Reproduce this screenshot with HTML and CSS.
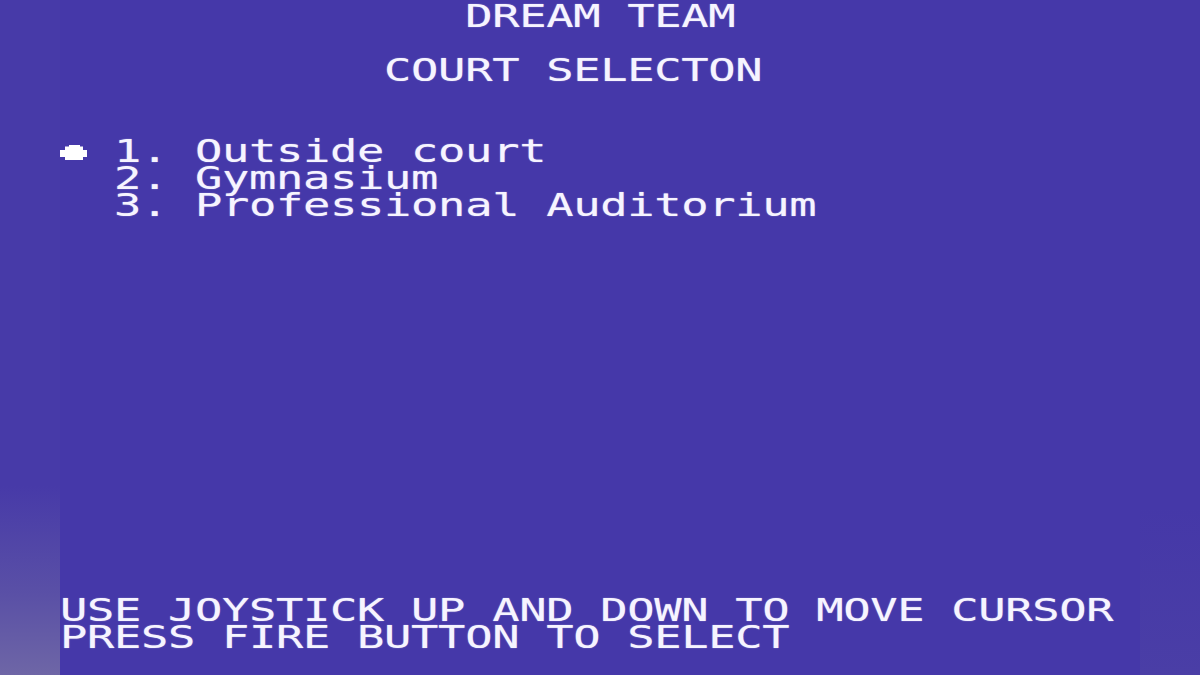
FILE: index.html
```html
<!DOCTYPE html>
<html>
<head>
<meta charset="utf-8">
<title>Dream Team - Court Selection</title>
<link rel="stylesheet" href="styles.css">
</head>
<body>
<div class="tv">
  <div class="border border-left"></div>
  <main class="screen">
    <div class="row"><span class="txt">               DREAM TEAM</span></div>
    <div class="row"></div>
    <div class="row"><span class="txt">            COURT SELECTON</span></div>
    <div class="row"></div>
    <div class="row"></div>
    <div class="row">
      <svg class="cursor" viewBox="0 0 27 27" width="27" height="27" aria-hidden="true">
        <path d="M9 10 H20 V11.5 H23 V15 H28 V22 H23 V25 H5 V22 H0 V15 H5 V11.5 H9 Z" fill="#ffffff"/>
      </svg>
      <span class="txt"> 1. Outside court</span>
    </div>
    <div class="row"><span class="txt">  2. Gymnasium</span></div>
    <div class="row"><span class="txt">  3. Professional Auditorium</span></div>
    <div class="footer">
      <div class="row"><span class="txt">USE JOYSTICK UP AND DOWN TO MOVE CURSOR</span></div>
      <div class="row"><span class="txt">PRESS FIRE BUTTON TO SELECT</span></div>
    </div>
  </main>
  <div class="border border-right"></div>
</div>
</body>
</html>
```
FILE: styles.css
```css
html, body {
  margin: 0;
  padding: 0;
  background: #4538a8;
}

.tv {
  width: 1200px;
  height: 675px;
  display: flex;
  overflow: hidden;
}

.border {
  width: 60px;
  flex: none;
}

.border-left {
  background: linear-gradient(to bottom, #473aa8 0%, #473aa8 72%, #5a50a6 88%, #6e66a6 100%);
}

.border-right {
  background: linear-gradient(to bottom, #4538a8 0%, #4538a8 75%, #4a3ea6 100%);
}

.screen {
  width: 1080px;
  flex: none;
  background: #4538a9;
  padding-top: 3px;
  display: flex;
  flex-direction: column;
  box-sizing: border-box;
}

.row {
  height: 27px;
  display: flex;
  align-items: flex-start;
  white-space: pre;
  font-family: "DejaVu Sans Mono", "Liberation Mono", monospace;
  font-size: 32px;
  line-height: 27px;
  color: #f6f4ff;
}

.txt {
  display: inline-block;
  letter-spacing: -0.26px;
  transform: scaleX(1.4211);
  transform-origin: 0 0;
  text-shadow: 0 0 1px rgba(255, 255, 255, 0.6);
}

.cursor {
  display: block;
  flex: none;
  width: 27px;
  height: 27px;
  margin-top: -3px;
}

.footer {
  margin-top: auto;
  padding-bottom: 24px;
}
```
